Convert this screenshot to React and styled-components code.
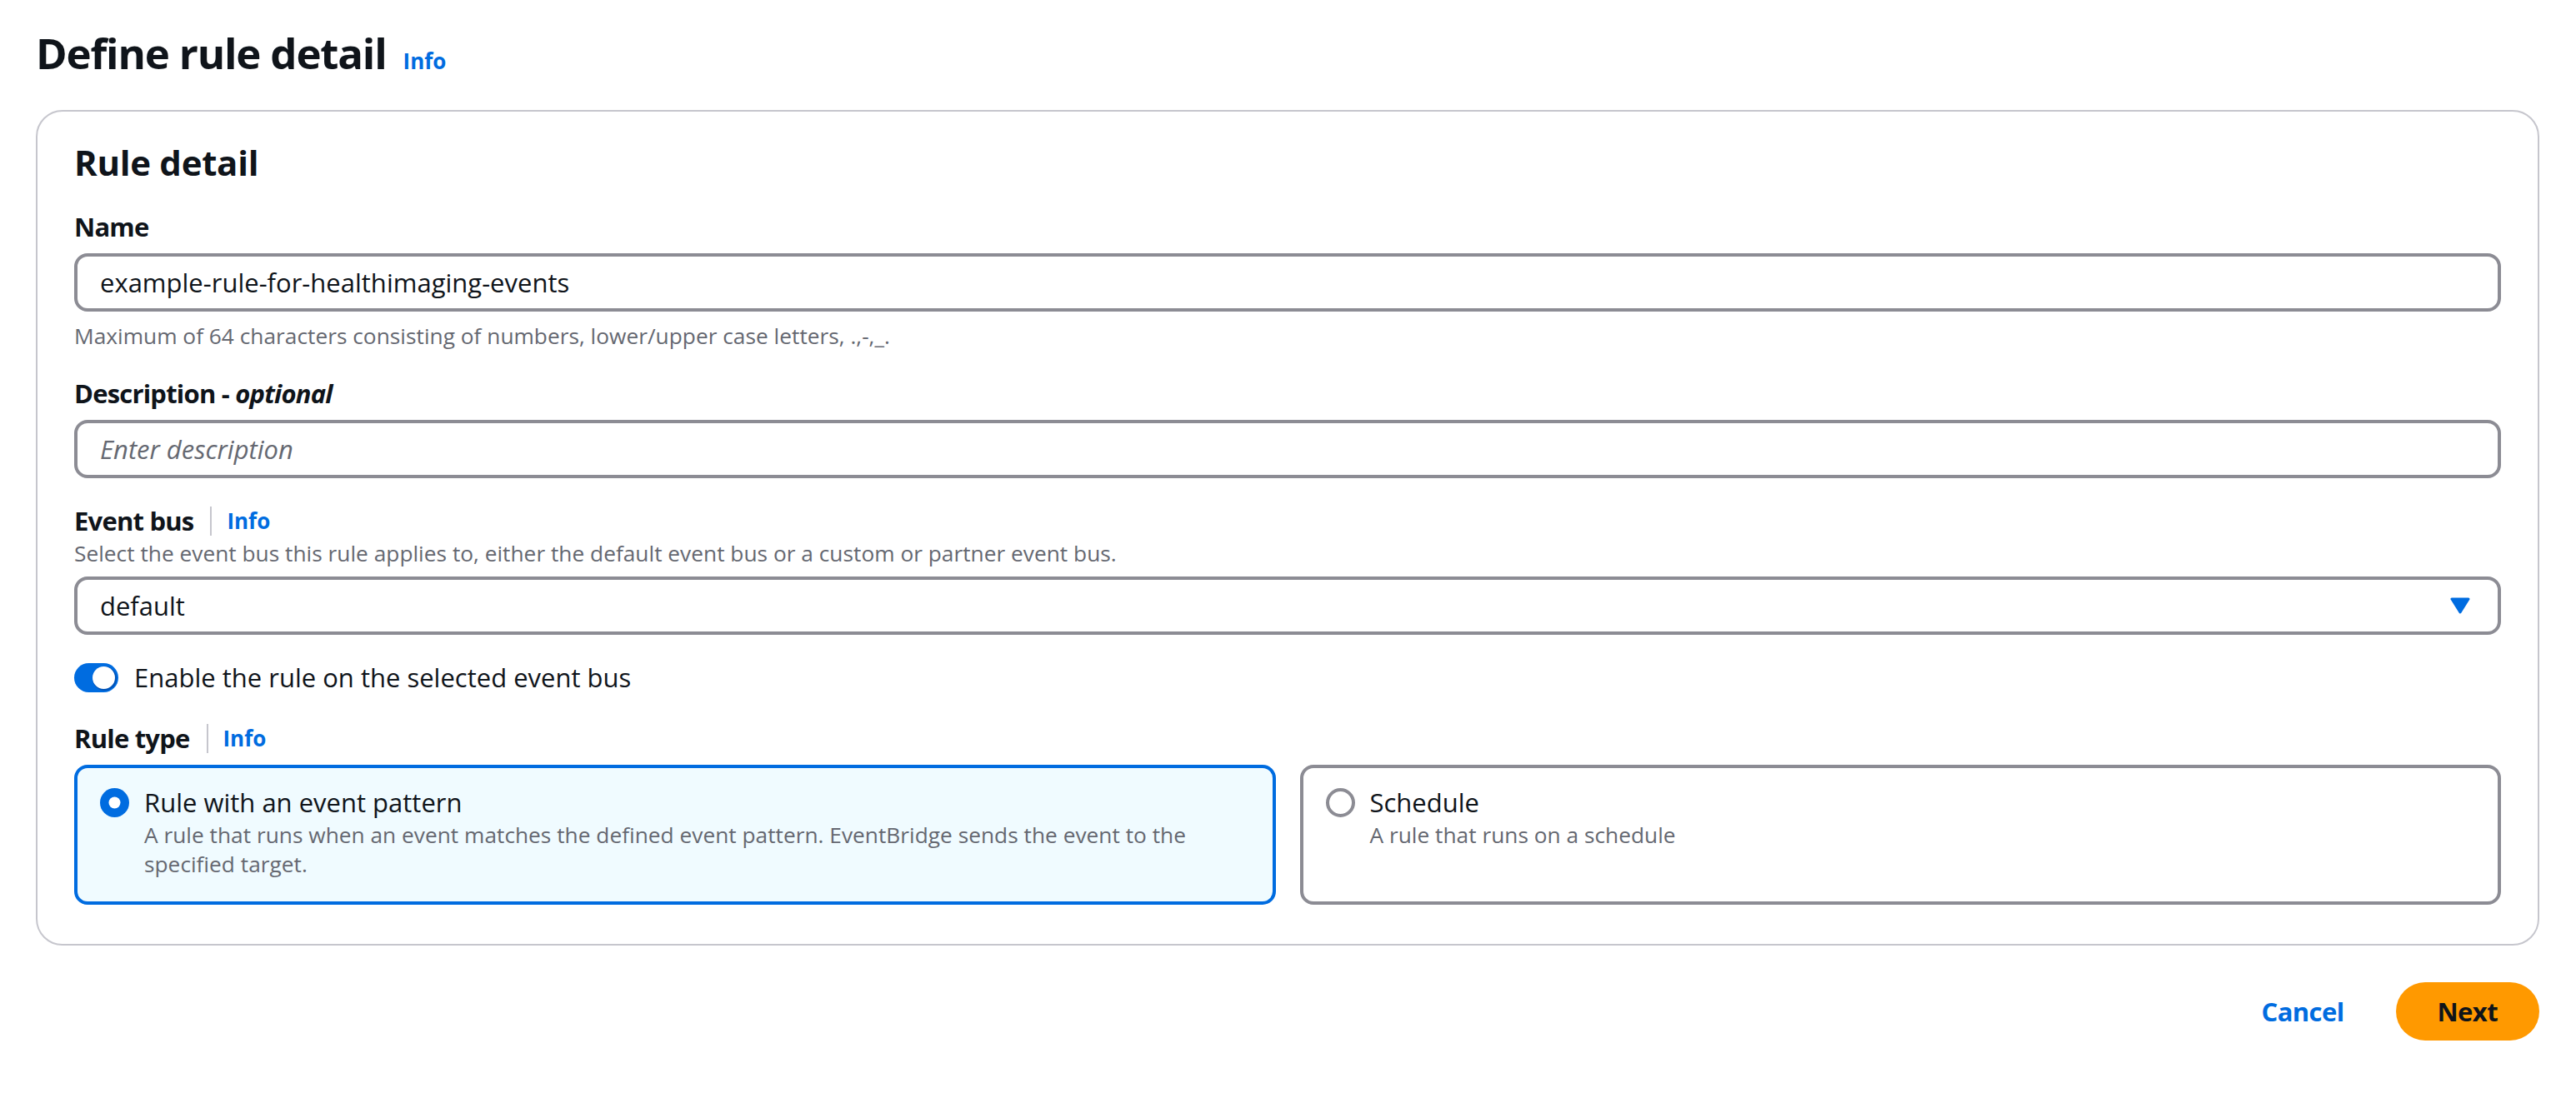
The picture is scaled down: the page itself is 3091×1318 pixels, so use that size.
import React from "react";
import styled, { createGlobalStyle } from "styled-components";

const GlobalStyle = createGlobalStyle`
  html, body { margin: 0; padding: 0; background: #ffffff; }
  body {
    font-family: "Open Sans", "Noto Sans", sans-serif;
    color: #0f141a;
    -webkit-font-smoothing: antialiased;
  }
  * { box-sizing: border-box; }
`;

const Page = styled.div`
  padding: 30px 44px 40px 43px;
  display: flex;
  flex-direction: column;
`;

const Header = styled.div`
  display: flex;
  align-items: baseline;
  gap: 20px;
  height: 66px;
`;

const Title = styled.h1`
  margin: 0;
  font-size: 51px;
  line-height: 66px;
  font-weight: 700;
  letter-spacing: -1.2px;
`;

const InfoLink = styled.a`
  font-size: 26px;
  font-weight: 700;
  color: #006ce0;
  text-decoration: none;
  line-height: 35px;
`;

const Container = styled.section`
  margin-top: 36px;
  border: 2px solid #c6c6cd;
  border-radius: 32px;
  padding: 35px 44px 47px 44px;
  display: flex;
  flex-direction: column;
  gap: 29px;
`;

const SectionTitle = styled.h2`
  margin: 0;
  font-size: 42px;
  line-height: 52px;
  font-weight: 700;
  letter-spacing: -0.3px;
`;

const Field = styled.div`
  display: flex;
  flex-direction: column;
`;

const LabelRow = styled.div`
  display: flex;
  align-items: center;
  height: 44px;
`;

const Label = styled.label`
  font-size: 31px;
  line-height: 44px;
  font-weight: 700;
  letter-spacing: -0.8px;
  em { font-style: italic; }
`;

const Divider = styled.span`
  width: 2px;
  height: 35px;
  background: #c6c6cd;
  margin: 0 18px 0 20px;
`;

const Description = styled.div`
  font-size: 26.3px;
  line-height: 35px;
  color: #656871;
`;

const Hint = styled(Description)`
  margin-top: 12px;
`;

const InputBox = styled.div`
  margin-top: 10px;
  height: 70px;
  border: 4px solid #8c8c94;
  border-radius: 16px;
  padding: 0 33px 0 27px;
  display: flex;
  align-items: center;
  justify-content: space-between;
  font-size: 31px;
  color: ${(p) => (p.$placeholder ? "#656871" : "#0f141a")};
  font-style: ${(p) => (p.$placeholder ? "italic" : "normal")};
  background: #ffffff;
`;

const ToggleRow = styled.div`
  display: flex;
  align-items: center;
  height: 44px;
  gap: 19px;
  font-size: 31px;
`;

const ToggleTrack = styled.span`
  width: 53px;
  height: 35px;
  border-radius: 18px;
  background: #006ce0;
  display: flex;
  align-items: center;
  justify-content: flex-end;
  padding-right: 4px;
`;

const ToggleHandle = styled.span`
  width: 27px;
  height: 27px;
  border-radius: 50%;
  background: #ffffff;
  box-shadow: 1px 1px 0 1px #0053b8;
`;

const Tiles = styled.div`
  margin-top: 10px;
  display: grid;
  grid-template-columns: 1fr 1fr;
  gap: 29px;
`;

const Tile = styled.div`
  border: 4px solid ${(p) => (p.$selected ? "#006ce0" : "#8c8c94")};
  background: ${(p) => (p.$selected ? "#f0fbff" : "#ffffff")};
  border-radius: 16px;
  padding: 19px 42px 27px 27px;
  display: flex;
  gap: 18px;
  min-height: 168px;
`;

const RadioBox = styled.span`
  flex: none;
  height: 44px;
  display: flex;
  align-items: center;
`;

const TileText = styled.div`
  display: flex;
  flex-direction: column;
`;

const TileLabel = styled.div`
  font-size: 31px;
  line-height: 44px;
`;

const Actions = styled.div`
  margin-top: 44px;
  display: flex;
  justify-content: flex-end;
  align-items: center;
  gap: 14px;
`;

const Button = styled.button`
  height: 70px;
  border-radius: 35px;
  border: none;
  font-family: inherit;
  font-size: 31px;
  font-weight: 700;
  letter-spacing: -0.6px;
  cursor: pointer;
  padding: 0 ${(p) => (p.$primary ? "50px" : "48px")};
  background: ${(p) => (p.$primary ? "#ff9900" : "transparent")};
  color: ${(p) => (p.$primary ? "#0f141a" : "#006ce0")};
`;

const Radio = ({ selected }) =>
  selected ? (
    <svg width="35" height="35" viewBox="0 0 35 35">
      <circle cx="17.5" cy="17.5" r="17.5" fill="#006ce0" />
      <circle cx="17.5" cy="17.5" r="7" fill="#ffffff" />
    </svg>
  ) : (
    <svg width="35" height="35" viewBox="0 0 35 35">
      <circle cx="17.5" cy="17.5" r="15.5" fill="#ffffff" stroke="#8c8c94" strokeWidth="4" />
    </svg>
  );

const Caret = () => (
  <svg width="24" height="20" viewBox="0 0 24 20">
    <path d="M2 2 L22 2 L12 18 Z" fill="#006ce0" stroke="#006ce0" strokeWidth="3" strokeLinejoin="round" />
  </svg>
);

export default function App() {
  return (
    <>
      <GlobalStyle />
      <Page>
        <Header>
          <Title>Define rule detail</Title>
          <InfoLink href="#">Info</InfoLink>
        </Header>
        <Container>
          <SectionTitle>Rule detail</SectionTitle>
          <Field>
            <LabelRow>
              <Label>Name</Label>
            </LabelRow>
            <InputBox>example-rule-for-healthimaging-events</InputBox>
            <Hint>Maximum of 64 characters consisting of numbers, lower/upper case letters, .,-,_.</Hint>
          </Field>
          <Field>
            <LabelRow>
              <Label>
                Description - <em>optional</em>
              </Label>
            </LabelRow>
            <InputBox $placeholder>Enter description</InputBox>
          </Field>
          <Field>
            <LabelRow>
              <Label>Event bus</Label>
              <Divider />
              <InfoLink href="#">Info</InfoLink>
            </LabelRow>
            <Description>
              Select the event bus this rule applies to, either the default event bus or a custom or partner event bus.
            </Description>
            <InputBox>
              <span>default</span>
              <Caret />
            </InputBox>
          </Field>
          <ToggleRow>
            <ToggleTrack>
              <ToggleHandle />
            </ToggleTrack>
            <span>Enable the rule on the selected event bus</span>
          </ToggleRow>
          <Field>
            <LabelRow>
              <Label>Rule type</Label>
              <Divider />
              <InfoLink href="#">Info</InfoLink>
            </LabelRow>
            <Tiles>
              <Tile $selected>
                <RadioBox>
                  <Radio selected />
                </RadioBox>
                <TileText>
                  <TileLabel>Rule with an event pattern</TileLabel>
                  <Description>
                    A rule that runs when an event matches the defined event pattern. EventBridge sends the event to the specified target.
                  </Description>
                </TileText>
              </Tile>
              <Tile>
                <RadioBox>
                  <Radio />
                </RadioBox>
                <TileText>
                  <TileLabel>Schedule</TileLabel>
                  <Description>A rule that runs on a schedule</Description>
                </TileText>
              </Tile>
            </Tiles>
          </Field>
        </Container>
        <Actions>
          <Button>Cancel</Button>
          <Button $primary>Next</Button>
        </Actions>
      </Page>
    </>
  );
}
